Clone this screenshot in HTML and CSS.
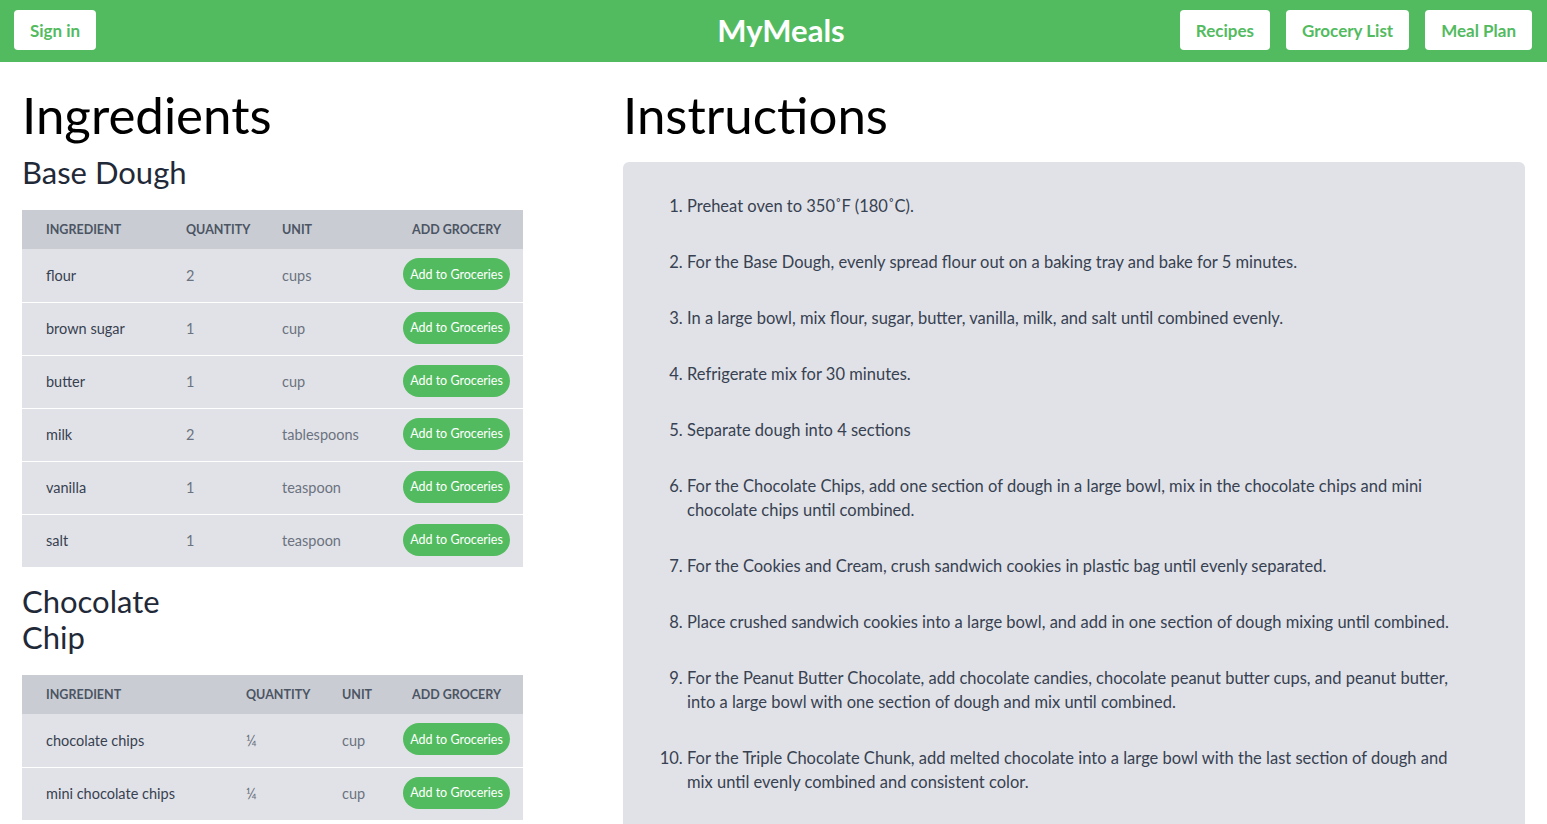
FILE: index.html
```html
<!DOCTYPE html>
<html lang="en">
<head>
<meta charset="utf-8">
<title>MyMeals</title>
<link rel="stylesheet" href="styles.css">
</head>
<body>
<header class="topbar">
  <div class="topbar-left"><a class="nav-btn" href="#">Sign in</a></div>
  <div class="brand">MyMeals</div>
  <nav class="topbar-right">
    <a class="nav-btn" href="#">Recipes</a>
    <a class="nav-btn" href="#">Grocery List</a>
    <a class="nav-btn" href="#">Meal Plan</a>
  </nav>
</header>
<main class="page">
  <section class="ingredients">
    <h1 class="page-title">Ingredients</h1>
    <h2 class="section-title">Base Dough</h2>
    <table class="ing-table">
      <colgroup>
        <col class="w-140"><col class="w-96"><col class="w-132"><col class="w-133">
      </colgroup>
      <thead>
        <tr><th>Ingredient</th><th>Quantity</th><th>Unit</th><th class="center">Add Grocery</th></tr>
      </thead>
      <tbody>
        <tr><td class="name">flour</td><td>2</td><td>cups</td><td class="center"><button class="add-btn">Add to Groceries</button></td></tr>
        <tr><td class="name">brown sugar</td><td>1</td><td>cup</td><td class="center"><button class="add-btn">Add to Groceries</button></td></tr>
        <tr><td class="name">butter</td><td>1</td><td>cup</td><td class="center"><button class="add-btn">Add to Groceries</button></td></tr>
        <tr><td class="name">milk</td><td>2</td><td>tablespoons</td><td class="center"><button class="add-btn">Add to Groceries</button></td></tr>
        <tr><td class="name">vanilla</td><td>1</td><td>teaspoon</td><td class="center"><button class="add-btn">Add to Groceries</button></td></tr>
        <tr><td class="name">salt</td><td>1</td><td>teaspoon</td><td class="center"><button class="add-btn">Add to Groceries</button></td></tr>
      </tbody>
    </table>
    <h2 class="section-title narrow">Chocolate Chip</h2>
    <table class="ing-table">
      <colgroup>
        <col class="w-200"><col class="w-96"><col class="w-72"><col class="w-133">
      </colgroup>
      <thead>
        <tr><th>Ingredient</th><th>Quantity</th><th>Unit</th><th class="center">Add Grocery</th></tr>
      </thead>
      <tbody>
        <tr><td class="name">chocolate chips</td><td>¼</td><td>cup</td><td class="center"><button class="add-btn">Add to Groceries</button></td></tr>
        <tr><td class="name">mini chocolate chips</td><td>¼</td><td>cup</td><td class="center"><button class="add-btn">Add to Groceries</button></td></tr>
      </tbody>
    </table>
  </section>
  <section class="instructions">
    <h1 class="page-title">Instructions</h1>
    <div class="steps-card">
      <ol class="steps">
        <li>Preheat oven to 350˚F (180˚C).</li>
        <li>For the Base Dough, evenly spread flour out on a baking tray and bake for 5 minutes.</li>
        <li>In a large bowl, mix flour, sugar, butter, vanilla, milk, and salt until combined evenly.</li>
        <li>Refrigerate mix for 30 minutes.</li>
        <li>Separate dough into 4 sections</li>
        <li>For the Chocolate Chips, add one section of dough in a large bowl, mix in the chocolate chips and mini chocolate chips until combined.</li>
        <li>For the Cookies and Cream, crush sandwich cookies in plastic bag until evenly separated.</li>
        <li>Place crushed sandwich cookies into a large bowl, and add in one section of dough mixing until combined.</li>
        <li>For the Peanut Butter Chocolate, add chocolate candies, chocolate peanut butter cups, and peanut butter, into a large bowl with one section of dough and mix until combined.</li>
        <li>For the Triple Chocolate Chunk, add melted chocolate into a large bowl with the last section of dough and mix until evenly combined and consistent color.</li>
      </ol>
    </div>
  </section>
</main>
</body>
</html>
```
FILE: styles.css
```css
* { box-sizing: border-box; }
html, body { margin: 0; padding: 0; }
body {
  font-family: "Lato", "Open Sans", sans-serif;
  color: #111827;
  background: #ffffff;
  overflow: hidden;
}
.topbar {
  height: 62px;
  background: #53bb5f;
  display: grid;
  grid-template-columns: 1fr auto 1fr;
  align-items: center;
  padding: 0 15px 2px 14px;
}
.topbar-left { display: flex; }
.topbar-right { display: flex; justify-content: flex-end; gap: 16px; }
.nav-btn {
  display: inline-flex;
  align-items: center;
  height: 40px;
  padding: 0 16px;
  background: #ffffff;
  color: #53bb5f;
  border-radius: 4px;
  font-weight: 700;
  font-size: 17px;
  text-decoration: none;
}
.brand {
  color: #ffffff;
  font-weight: 700;
  font-size: 31px;
  margin-left: 16px;
}
.page {
  display: grid;
  grid-template-columns: 501px 1fr;
  column-gap: 100px;
  padding: 0 22px;
}
.page-title {
  margin: 24px 0 0;
  font-size: 51px;
  font-weight: 400;
  line-height: 58px;
  color: #000;
}
.section-title {
  margin: 10px 0 20px;
  font-size: 31px;
  font-weight: 400;
  line-height: 36px;
  color: #1f2937;
}
.section-title.narrow { max-width: 180px; margin-top: 16px; }
.ing-table {
  width: 501px;
  table-layout: fixed;
  border-collapse: collapse;
  background: #e1e2e7;
}
.w-140 { width: 140px; }
.w-96 { width: 96px; }
.w-132 { width: 132px; }
.w-133 { width: 133px; }
.w-200 { width: 200px; }
.w-72 { width: 72px; }
.ing-table thead tr { background: #caccd4; height: 39px; }
.ing-table th {
  text-align: left;
  padding: 0 0 0 24px;
  font-size: 12.5px;
  font-weight: 700;
  text-transform: uppercase;
  color: #4b5563;
  white-space: nowrap;
}
.ing-table tbody tr { height: 53px; border-top: 1px solid #ffffff; }
.ing-table tbody tr:first-child { border-top: 0; }
.ing-table td {
  padding: 0 0 0 24px;
  font-size: 14.5px;
  color: #6b7280;
  white-space: nowrap;
}
.ing-table td.name { color: #374151; }
.ing-table .center { text-align: center; padding: 0; }
.add-btn {
  height: 32px;
  width: 107px;
  border: 0;
  border-radius: 16px;
  background: #53bb5f;
  color: #ffffff;
  font-family: inherit;
  font-size: 12.5px;
  padding: 0;
  margin-top: -2px;
}
.steps-card {
  margin-top: 18px;
  background: #e1e2e7;
  border-radius: 6px;
  padding: 32px 64px 40px 24px;
  min-height: 700px;
}
.steps {
  margin: 0;
  padding-left: 40px;
  font-size: 16.5px;
  line-height: 24px;
  color: #374151;
}
.steps li { margin-bottom: 32px; }
```
